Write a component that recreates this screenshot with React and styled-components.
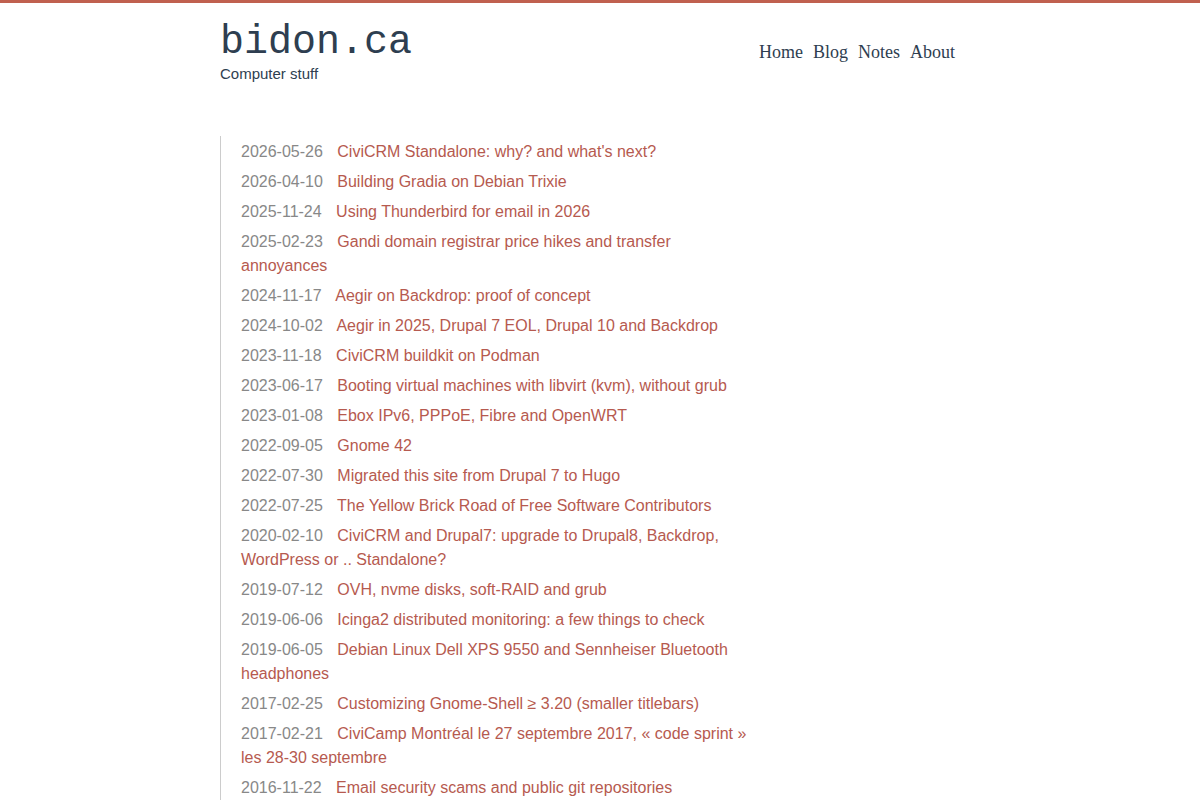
import React from 'react';
import styled, { createGlobalStyle } from 'styled-components';

const posts = [
  ['2026-05-26', "CiviCRM Standalone: why? and what's next?"],
  ['2026-04-10', 'Building Gradia on Debian Trixie'],
  ['2025-11-24', 'Using Thunderbird for email in 2026'],
  ['2025-02-23', 'Gandi domain registrar price hikes and transfer annoyances'],
  ['2024-11-17', 'Aegir on Backdrop: proof of concept'],
  ['2024-10-02', 'Aegir in 2025, Drupal 7 EOL, Drupal 10 and Backdrop'],
  ['2023-11-18', 'CiviCRM buildkit on Podman'],
  ['2023-06-17', 'Booting virtual machines with libvirt (kvm), without grub'],
  ['2023-01-08', 'Ebox IPv6, PPPoE, Fibre and OpenWRT'],
  ['2022-09-05', 'Gnome 42'],
  ['2022-07-30', 'Migrated this site from Drupal 7 to Hugo'],
  ['2022-07-25', 'The Yellow Brick Road of Free Software Contributors'],
  ['2020-02-10', 'CiviCRM and Drupal7: upgrade to Drupal8, Backdrop, WordPress or .. Standalone?'],
  ['2019-07-12', 'OVH, nvme disks, soft-RAID and grub'],
  ['2019-06-06', 'Icinga2 distributed monitoring: a few things to check'],
  ['2019-06-05', 'Debian Linux Dell XPS 9550 and Sennheiser Bluetooth headphones'],
  ['2017-02-25', 'Customizing Gnome-Shell \u2265 3.20 (smaller titlebars)'],
  ['2017-02-21', 'CiviCamp Montréal le 27 septembre 2017, « code sprint » les 28-30 septembre'],
  ['2016-11-22', 'Email security scams and public git repositories'],
];

const App = () => {
  return (
    <>
      <GlobalStyle />
      <Page>
        <Header>
          <Brand>
            <SiteTitle href='#'>bidon.ca</SiteTitle>
            <Tagline>Computer stuff</Tagline>
          </Brand>
          <Nav>
            <NavLink href='#'>Home</NavLink>
            <NavLink href='#'>Blog</NavLink>
            <NavLink href='#'>Notes</NavLink>
            <NavLink href='#'>About</NavLink>
          </Nav>
        </Header>
        <PostList>
          {posts.map(([date, title]) => (
            <PostItem key={date + title}>
              <PostDate>{date}</PostDate>{' '}
              <PostLink href='#'>{title}</PostLink>
            </PostItem>
          ))}
        </PostList>
      </Page>
    </>
  );
};

const GlobalStyle = createGlobalStyle`
  html, body {
    margin: 0;
    padding: 0;
    background: #fff;
  }

  body {
    border-top: 3px solid #c0604f;
    font-family: "Liberation Sans", Arial, sans-serif;
    color: #2e3e50;
    overflow: hidden;
    height: 797px;
  }
`;

const Page = styled.div`
  width: 760px;
  margin: 0 auto;
`;

const Header = styled.header`
  display: flex;
  justify-content: space-between;
  align-items: flex-start;
  padding-top: 17px;
`;

const Brand = styled.div`
  display: flex;
  flex-direction: column;
`;

const SiteTitle = styled.a`
  font-family: "Liberation Mono", "Courier New", monospace;
  font-size: 40px;
  line-height: 45px;
  color: #2e3e50;
  text-decoration: none;
`;

const Tagline = styled.div`
  font-size: 15px;
  line-height: 18px;
  color: #2e3e50;
`;

const Nav = styled.nav`
  display: flex;
  gap: 10px;
  padding-top: 20px;
  padding-right: 25px;
`;

const NavLink = styled.a`
  font-family: "Liberation Serif", "Times New Roman", serif;
  font-size: 18px;
  line-height: 24px;
  color: #2e3e50;
  text-decoration: none;
`;

const PostList = styled.ul`
  list-style: none;
  width: 532px;
  box-sizing: border-box;
  margin: 53px 0 0;
  padding: 4px 0 0 20px;
  border-left: 1px solid #ccc;
`;

const PostItem = styled.li`
  font-size: 16px;
  line-height: 24px;
  margin-bottom: 6px;
`;

const PostDate = styled.span`
  color: #888;
  margin-right: 10px;
`;

const PostLink = styled.a`
  color: #b65a4f;
  text-decoration: none;
`;

export default App;
